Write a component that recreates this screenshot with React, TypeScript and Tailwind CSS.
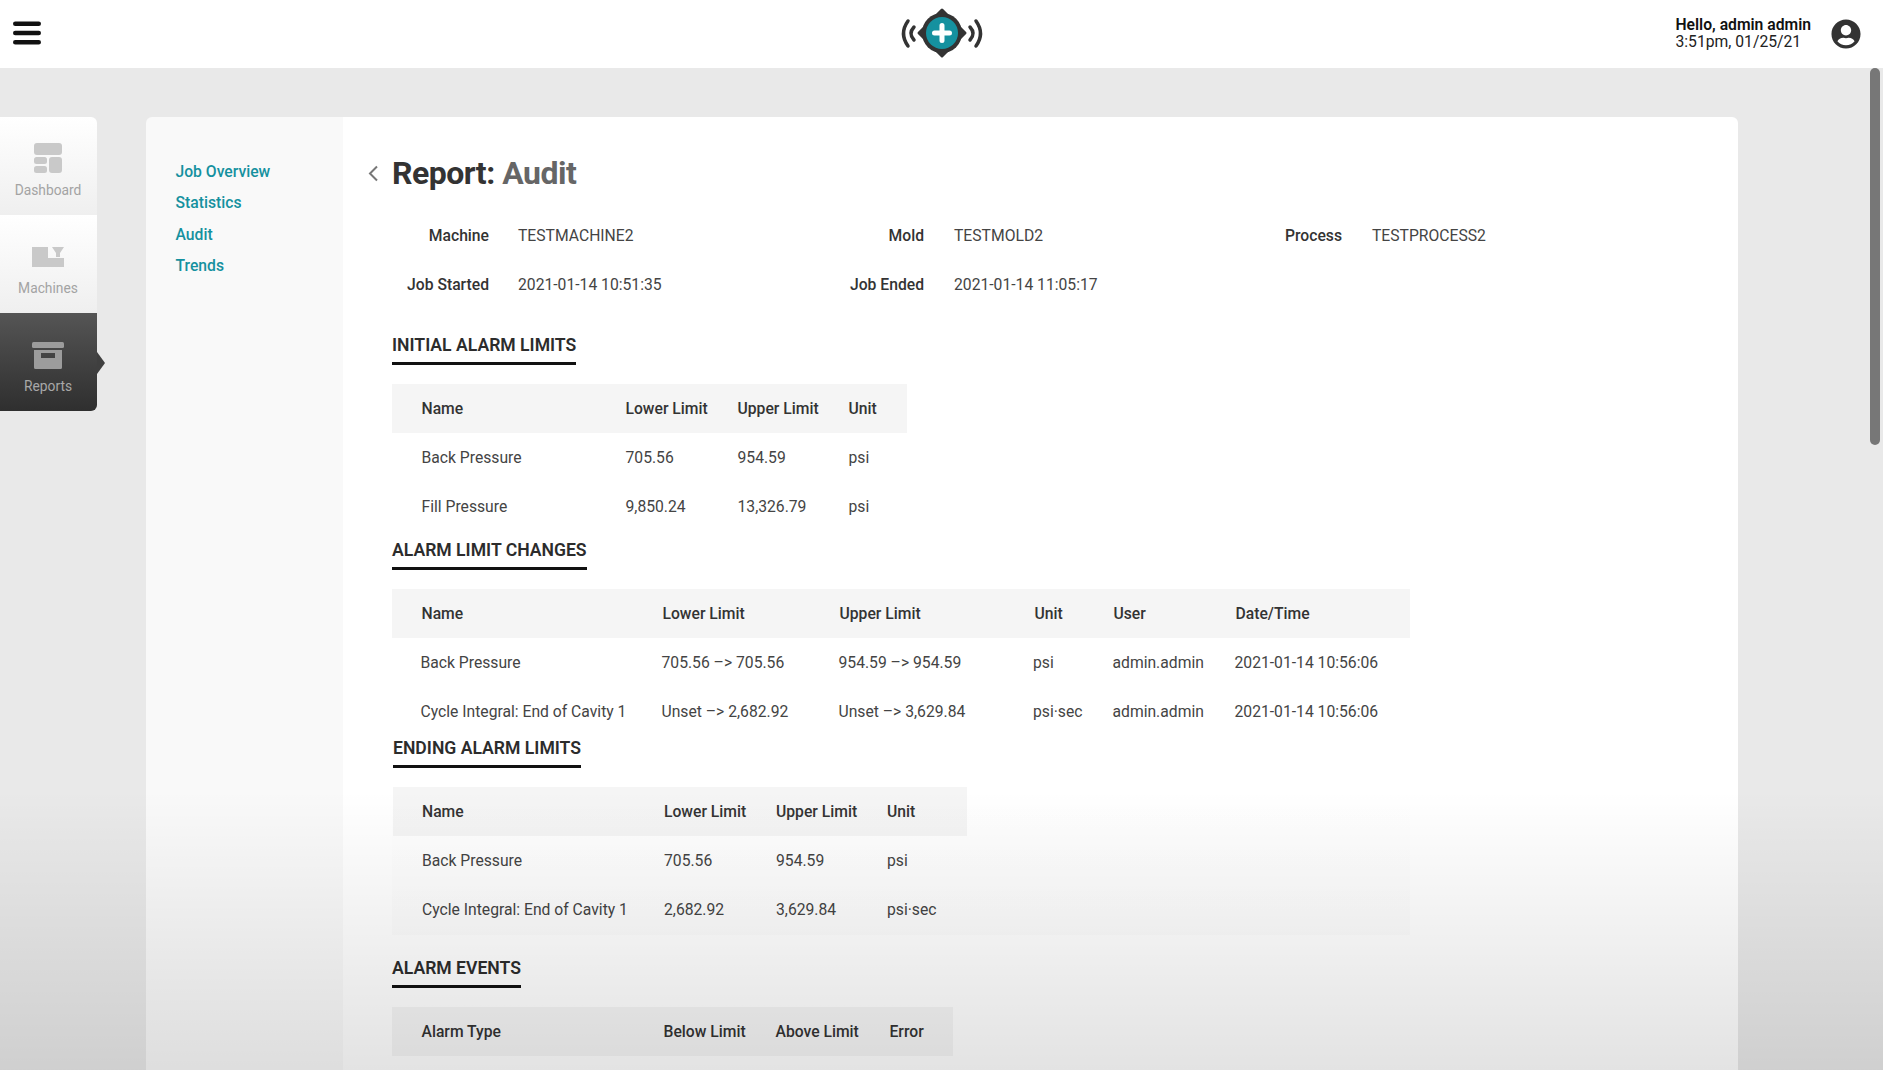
import { FaUserCircle } from "react-icons/fa";

type TableProps = {
  className: string;
  headClass: string;
  rowClass?: string;
  head: string[];
  rows: string[][];
};

const sideItemClass =
  "flex h-[98px] flex-col items-center bg-gradient-to-b from-white to-[#efefef] pr-px text-[13.8px] text-[#a3a3a3]";

const changesHead = ["Name", "Lower Limit", "Upper Limit", "Unit", "User", "Date/Time"];
const limitHead = ["Name", "Lower Limit", "Upper Limit", "Unit"];

function DataTable({ className, headClass, rowClass, head, rows }: TableProps) {
  return (
    <div className={className}>
      <div className={`grid h-[49px] items-center bg-[#f5f5f5] font-medium text-[#333] ${headClass}`}>
        {head.map((cell) => (
          <span key={cell}>{cell}</span>
        ))}
      </div>
      {rows.map((row) => (
        <div key={row[0]} className={`grid h-[49px] items-center text-[#444] ${rowClass ?? headClass}`}>
          {row.map((cell, i) => (
            <span key={i} className="whitespace-nowrap">
              {cell}
            </span>
          ))}
        </div>
      ))}
    </div>
  );
}

function SectionTitle({ children, className }: { children: string; className?: string }) {
  return (
    <h2
      className={`w-fit border-b-[3px] border-[#111] pb-[5px] text-[17.6px] leading-6 font-semibold text-[#2c2c2c] ${className ?? ""}`}
    >
      {children}
    </h2>
  );
}

function Logo() {
  return (
    <svg className="mb-[2px] ml-[2px]" width="94" height="56" viewBox="0 0 94 56" fill="none">
      <g stroke="#333" strokeWidth="3.5" strokeLinecap="round">
        <path d="M13 16 Q4 28.5 13 41" />
        <path d="M19 22 Q13 28.5 19 35" />
        <path d="M81 16 Q90 28.5 81 41" />
        <path d="M75 22 Q81 28.5 75 35" />
      </g>
      <circle cx="47" cy="28" r="20" fill="#333" />
      <polygon points="47,5 70,28 47,51 24,28" fill="#333" stroke="#333" strokeWidth="3" strokeLinejoin="round" />
      <circle cx="47" cy="28" r="16" fill="#15919f" />
      <path d="M39.5 28 H54.5 M47 20.5 V35.5" stroke="#fff" strokeWidth="5" strokeLinecap="round" />
    </svg>
  );
}

function DashboardIcon() {
  return (
    <svg width="28" height="30" viewBox="0 0 28 30" fill="#c9c9c9">
      <rect x="0" y="0" width="28" height="12" rx="3" />
      <rect x="0" y="14" width="13" height="7" rx="2.5" />
      <rect x="0" y="23" width="13" height="7" rx="2.5" />
      <rect x="15" y="14" width="13" height="16" rx="3" />
    </svg>
  );
}

function MachinesIcon() {
  return (
    <svg width="32" height="20" viewBox="0 0 32 20" fill="#c9c9c9">
      <path d="M0 0 H16 V11 H32 V20 H0 Z" />
      <path d="M20 0 H32 L28 6 V10 H24 V6 Z" />
    </svg>
  );
}

function ReportsIcon() {
  return (
    <svg width="32" height="27" viewBox="0 0 32 27" fill="#9c9c9c">
      <rect x="0" y="0" width="32" height="6" rx="1.5" />
      <path fillRule="evenodd" d="M2 8 H30 V25.5 a1.5 1.5 0 0 1 -1.5 1.5 H3.5 a1.5 1.5 0 0 1 -1.5 -1.5 Z M9 11 V16 H23 V11 Z" />
    </svg>
  );
}

function Sidebar() {
  return (
    <aside className="w-[97px] shrink-0 self-start">
      <div className={`${sideItemClass} rounded-tr-md pt-[26px]`}>
        <DashboardIcon />
        <span className="mt-[7px] leading-5">Dashboard</span>
      </div>
      <div className={`${sideItemClass} pt-[32px]`}>
        <MachinesIcon />
        <span className="mt-[11px] leading-5">Machines</span>
      </div>
      <div className="relative flex h-[98px] flex-col items-center rounded-br-md bg-gradient-to-b from-[#555] to-[#2f2f2f] pt-[29px] pr-px text-[13.8px] text-[#a8a8a8]">
        <ReportsIcon />
        <span className="mt-[7px] leading-5">Reports</span>
        <span className="absolute top-[39px] left-full h-0 w-0 border-y-[11px] border-l-[8px] border-y-transparent border-l-[#3f3f3f]" />
      </div>
    </aside>
  );
}

function SubNav() {
  return (
    <nav className="flex w-[197px] shrink-0 flex-col gap-[7.4px] bg-[#f9f9f9] pt-[43px] pl-[29.5px] font-medium text-[#15919f]">
      <a className="leading-6">Job Overview</a>
      <a className="leading-6">Statistics</a>
      <a className="leading-6">Audit</a>
      <a className="leading-6">Trends</a>
    </nav>
  );
}

function JobDetails() {
  return (
    <div className="mt-[18px] grid grid-cols-[97px_284px_93px_267px_93px_auto] gap-x-[29px] text-[#444]">
      <span className="flex h-[49px] items-center justify-end font-medium text-[#333]">Machine</span>
      <span className="flex h-[49px] items-center">TESTMACHINE2</span>
      <span className="flex h-[49px] items-center justify-end font-medium text-[#333]">Mold</span>
      <span className="flex h-[49px] items-center pl-px">TESTMOLD2</span>
      <span className="flex h-[49px] items-center justify-end font-medium text-[#333]">Process</span>
      <span className="flex h-[49px] items-center pl-px">TESTPROCESS2</span>
      <span className="flex h-[49px] items-center justify-end font-medium text-[#333]">Job Started</span>
      <span className="flex h-[49px] items-center">2021-01-14 10:51:35</span>
      <span className="flex h-[49px] items-center justify-end font-medium text-[#333]">Job Ended</span>
      <span className="flex h-[49px] items-center pl-px">2021-01-14 11:05:17</span>
    </div>
  );
}

export default function App() {
  return (
    <div className="relative h-[1070px] overflow-hidden bg-[#e9e9e9] font-['Roboto',sans-serif] text-[15.7px]">
      <header className="grid h-[68px] grid-cols-3 items-center bg-white">
        <svg className="mb-[2px] ml-[13px]" width="28" height="24" viewBox="0 0 28 24" stroke="#111" strokeWidth="4.6" strokeLinecap="round">
          <path d="M2.3 2.8 H25.7 M2.3 12 H25.7 M2.3 21.2 H25.7" />
        </svg>
        <div className="flex justify-center">
          <Logo />
        </div>
        <div className="flex items-center justify-end gap-[20px] pr-[22px]">
          <div className="mb-[2px] leading-[17px] text-[#111]">
            <div className="font-semibold">Hello, admin admin</div>
            <div className="text-[#222]">3:51pm, 01/25/21</div>
          </div>
          <FaUserCircle className="text-[#333]" size={30} />
        </div>
      </header>

      <div className="flex gap-[49px] pt-[49px]">
        <Sidebar />
        <div className="flex h-[1200px] w-[1592px] overflow-hidden rounded-t-md">
          <SubNav />
          <main className="flex-1 bg-white pt-[36px] pl-[25px]">
            <div className="flex h-10 items-center">
              <svg width="11" height="17" viewBox="0 0 11 17" fill="none" stroke="#777" strokeWidth="2" className="mr-[13px]">
                <path d="M9 1.5 L2 8.5 L9 15.5" />
              </svg>
              <h1 className="text-[32px] font-bold tracking-[-0.5px] text-[#333]">
                Report: <span className="text-[#666]">Audit</span>
              </h1>
            </div>

            <div className="pl-[24px]">
              <JobDetails />

              <SectionTitle className="mt-[24px] mb-[19px]">INITIAL ALARM LIMITS</SectionTitle>
              <DataTable
                className="w-[515px]"
                headClass="grid-cols-[204px_112px_111px_1fr] pl-[29.5px]"
                head={limitHead}
                rows={[
                  ["Back Pressure", "705.56", "954.59", "psi"],
                  ["Fill Pressure", "9,850.24", "13,326.79", "psi"],
                ]}
              />

              <SectionTitle className="mt-[7px] mb-[19px]">ALARM LIMIT CHANGES</SectionTitle>
              <DataTable
                className="w-[1018px]"
                headClass="grid-cols-[241px_177px_195px_79px_122px_1fr] pl-[29.5px]"
                rowClass="grid-cols-[241px_177px_194.5px_79.5px_122px_1fr] pl-[28.5px]"
                head={changesHead}
                rows={[
                  ["Back Pressure", "705.56 –> 705.56", "954.59 –> 954.59", "psi", "admin.admin", "2021-01-14 10:56:06"],
                  ["Cycle Integral: End of Cavity 1", "Unset –> 2,682.92", "Unset –> 3,629.84", "psi·sec", "admin.admin", "2021-01-14 10:56:06"],
                ]}
              />

              <SectionTitle className="mb-[19px] ml-px">ENDING ALARM LIMITS</SectionTitle>
              <DataTable
                className="ml-px w-[574px]"
                headClass="grid-cols-[242px_112px_111px_1fr] pl-[29px]"
                head={limitHead}
                rows={[
                  ["Back Pressure", "705.56", "954.59", "psi"],
                  ["Cycle Integral: End of Cavity 1", "2,682.92", "3,629.84", "psi·sec"],
                ]}
              />

              <SectionTitle className="mt-[22px] mb-[19px]">ALARM EVENTS</SectionTitle>
              <DataTable
                className="w-[561px]"
                headClass="grid-cols-[242px_112px_114px_1fr] pl-[29.5px]"
                head={["Alarm Type", "Below Limit", "Above Limit", "Error"]}
                rows={[]}
              />
            </div>
          </main>
        </div>
      </div>

      <div className="pointer-events-none absolute top-[788px] left-[392px] h-[147px] w-[1018px] bg-gradient-to-b from-transparent to-black/[0.014]" />
      <div className="pointer-events-none absolute inset-x-0 bottom-0 h-[280px] bg-gradient-to-b from-transparent to-black/[0.11]" />
      <div className="absolute top-[68px] left-[1870px] h-[377px] w-[10px] rounded-full bg-[#777]" />
    </div>
  );
}
